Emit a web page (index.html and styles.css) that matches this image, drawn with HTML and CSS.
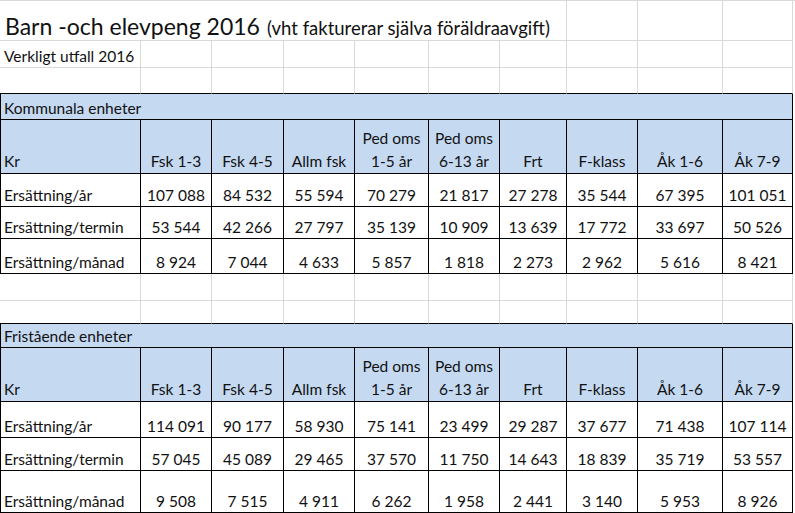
FILE: index.html
```html
<!DOCTYPE html>
<html lang="sv">
<head>
<meta charset="utf-8">
<title>Barn -och elevpeng 2016</title>
<link rel="stylesheet" href="styles.css">
</head>
<body>
<div class="sheet">
  <div class="c title span7"><span class="line"><span class="big">Barn -och elevpeng 2016</span> <span class="sub">(vht fakturerar själva föräldraavgift)</span></span></div>
  <div class="c"></div><div class="c"></div><div class="c"></div>

  <div class="c txt">Verkligt utfall 2016</div>
  <div class="c"></div><div class="c"></div><div class="c"></div><div class="c"></div><div class="c"></div><div class="c"></div><div class="c"></div><div class="c"></div><div class="c"></div>

  <div class="c above"></div><div class="c above"></div><div class="c above"></div><div class="c above"></div><div class="c above"></div><div class="c above"></div><div class="c above"></div><div class="c above"></div><div class="c above"></div><div class="c above"></div>

  <div class="c t first hd sect span10">Kommunala enheter</div>

  <div class="c t first hd">Kr</div>
  <div class="c t hd num">Fsk 1-3</div>
  <div class="c t hd num">Fsk 4-5</div>
  <div class="c t hd num">Allm fsk</div>
  <div class="c t hd num"><span>Ped oms<br>1-5 år</span></div>
  <div class="c t hd num"><span>Ped oms<br>6-13 år</span></div>
  <div class="c t hd num">Frt</div>
  <div class="c t hd num">F-klass</div>
  <div class="c t hd num">Åk 1-6</div>
  <div class="c t hd num">Åk 7-9</div>

  <div class="c t first">Ersättning/år</div>
  <div class="c t num">107 088</div><div class="c t num">84 532</div><div class="c t num">55 594</div><div class="c t num">70 279</div><div class="c t num">21 817</div><div class="c t num">27 278</div><div class="c t num">35 544</div><div class="c t num">67 395</div><div class="c t num">101 051</div>

  <div class="c t first">Ersättning/termin</div>
  <div class="c t num">53 544</div><div class="c t num">42 266</div><div class="c t num">27 797</div><div class="c t num">35 139</div><div class="c t num">10 909</div><div class="c t num">13 639</div><div class="c t num">17 772</div><div class="c t num">33 697</div><div class="c t num">50 526</div>

  <div class="c t first">Ersättning/månad</div>
  <div class="c t num">8 924</div><div class="c t num">7 044</div><div class="c t num">4 633</div><div class="c t num">5 857</div><div class="c t num">1 818</div><div class="c t num">2 273</div><div class="c t num">2 962</div><div class="c t num">5 616</div><div class="c t num">8 421</div>

  <div class="c"></div><div class="c"></div><div class="c"></div><div class="c"></div><div class="c"></div><div class="c"></div><div class="c"></div><div class="c"></div><div class="c"></div><div class="c"></div>

  <div class="c above"></div><div class="c above"></div><div class="c above"></div><div class="c above"></div><div class="c above"></div><div class="c above"></div><div class="c above"></div><div class="c above"></div><div class="c above"></div><div class="c above"></div>

  <div class="c t first hd sect span10">Fristående enheter</div>

  <div class="c t first hd">Kr</div>
  <div class="c t hd num">Fsk 1-3</div>
  <div class="c t hd num">Fsk 4-5</div>
  <div class="c t hd num">Allm fsk</div>
  <div class="c t hd num"><span>Ped oms<br>1-5 år</span></div>
  <div class="c t hd num"><span>Ped oms<br>6-13 år</span></div>
  <div class="c t hd num">Frt</div>
  <div class="c t hd num">F-klass</div>
  <div class="c t hd num">Åk 1-6</div>
  <div class="c t hd num">Åk 7-9</div>

  <div class="c t first">Ersättning/år</div>
  <div class="c t num">114 091</div><div class="c t num">90 177</div><div class="c t num">58 930</div><div class="c t num">75 141</div><div class="c t num">23 499</div><div class="c t num">29 287</div><div class="c t num">37 677</div><div class="c t num">71 438</div><div class="c t num">107 114</div>

  <div class="c t first">Ersättning/termin</div>
  <div class="c t num">57 045</div><div class="c t num">45 089</div><div class="c t num">29 465</div><div class="c t num">37 570</div><div class="c t num">11 750</div><div class="c t num">14 643</div><div class="c t num">18 839</div><div class="c t num">35 719</div><div class="c t num">53 557</div>

  <div class="c t first">Ersättning/månad</div>
  <div class="c t num">9 508</div><div class="c t num">7 515</div><div class="c t num">4 911</div><div class="c t num">6 262</div><div class="c t num">1 958</div><div class="c t num">2 441</div><div class="c t num">3 140</div><div class="c t num">5 953</div><div class="c t num">8 926</div>
</div>
</body>
</html>
```

FILE: styles.css
```css
* { box-sizing: border-box; margin: 0; padding: 0; }
html, body { background: #fff; }
body {
  margin: 0;
  font-family: Lato, "Open Sans", sans-serif;
  font-size: 15.5px;
  color: #111;
}
.sheet {
  display: grid;
  width: 795px;
  grid-template-columns: 141px 71px 72px 71px 74px 71px 67px 71px 85px 70px;
  grid-template-rows: 40px 27px 26px 26px 54px 33px 32px 35px 27px 23px 24px 54px 36px 33px 42px;
  border-top: 1px solid #d9d9d9;
}
.c {
  display: flex;
  flex-direction: column;
  justify-content: flex-end;
  min-width: 0;
  white-space: nowrap;
  line-height: 20px;
  padding: 0 3px 1px 3px;
  border-right: 1px solid #d9d9d9;
  border-bottom: 1px solid #d9d9d9;
}
.span7 { grid-column: span 7; }
.span10 { grid-column: span 10; }
.title { padding: 0 0 1px 5px; }
.title .line { line-height: 20px; font-size: 16px; }
.big { font-size: 23px; margin-right: 3px; }
.sub { font-size: 18.5px; }
.txt { padding-left: 4px; padding-bottom: 1px; }
.above { border-bottom-color: #000; }
.t {
  border-right-color: #000;
  border-bottom-color: #000;
}
.first { border-left: 1px solid #000; padding-left: 3px; }
.hd { background: #c5d9f1; line-height: 23px; padding-bottom: 0; }
.sect { line-height: 20px; padding-bottom: 1px; }
.num { text-align: center; padding-left: 0; padding-right: 0; }
```
